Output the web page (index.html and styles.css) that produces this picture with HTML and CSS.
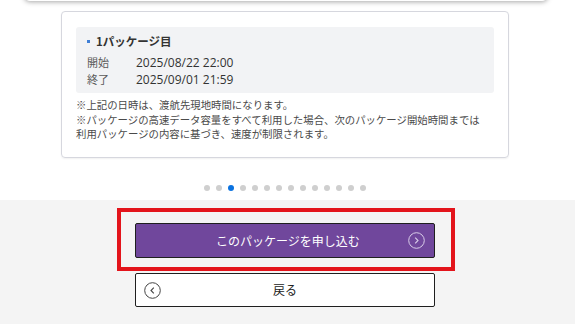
FILE: index.html
```html
<!DOCTYPE html>
<html lang="ja">
<head>
<meta charset="utf-8">
<link rel="stylesheet" href="styles.css">
</head>
<body>
<div class="topcard"></div>
<div class="wrap">
  <div class="card">
    <div class="pkg">
      <div class="pkg-title"><span class="bullet"></span>1パッケージ目</div>
      <div class="row"><span class="lbl">開始</span><span class="val">2025/08/22 22:00</span></div>
      <div class="row"><span class="lbl">終了</span><span class="val">2025/09/01 21:59</span></div>
    </div>
    <div class="notes">
      <div>※上記の日時は、渡航先現地時間になります。</div>
      <div>※パッケージの高速データ容量をすべて利用した場合、次のパッケージ開始時間までは</div>
      <div>利用パッケージの内容に基づき、速度が制限されます。</div>
    </div>
  </div>
  <div class="dots">
    <span class="dot"></span><span class="dot"></span><span class="dot active"></span><span class="dot"></span><span class="dot"></span><span class="dot"></span><span class="dot"></span><span class="dot"></span><span class="dot"></span><span class="dot"></span><span class="dot"></span><span class="dot"></span><span class="dot"></span><span class="dot"></span>
  </div>
</div>
<div class="footer">
  <div class="wrap">
    <div class="primary-wrap">
      <button class="btn primary">
        <span class="btn-text">このパッケージを申し込む</span>
        <svg class="ico ico-right" width="17" height="17" viewBox="0 0 17 17"><circle cx="8.5" cy="8.5" r="7.8" fill="none" stroke="#d9cde9" stroke-width="1"/><path d="M7.2 5.6 L10 8.5 L7.2 11.4" fill="none" stroke="#d9cde9" stroke-width="1.1"/></svg>
      </button>
      <div class="highlight"></div>
    </div>
    <button class="btn back">
      <svg class="ico ico-left" width="17" height="17" viewBox="0 0 17 17"><circle cx="8.5" cy="8.5" r="7.8" fill="none" stroke="#444" stroke-width="1"/><path d="M9.8 5.6 L7 8.5 L9.8 11.4" fill="none" stroke="#444" stroke-width="1.1"/></svg>
      <span class="btn-text">戻る</span>
    </button>
  </div>
</div>
</body>
</html>
```
FILE: styles.css
```css
html, body {
  margin: 0;
  padding: 0;
  background: #fff;
  font-family: "Noto Sans CJK JP", "Noto Sans", sans-serif;
  color: #333;
  height: 324px;
  overflow: hidden;
}
.topcard {
  margin: -9px 27px 0 24px;
  height: 10px;
  background: #fff;
  border-radius: 0 0 6px 6px;
  box-shadow: 0 1px 5px rgba(0,0,0,0.35);
}
.wrap {
  margin-left: 61px;
  width: 448px;
}
.card {
  margin-top: 10px;
  border: 1px solid #d6d7de;
  border-radius: 4px;
  padding: 15px 14px 15px 14px;
  box-shadow: 0 1px 2px rgba(0,0,0,0.06);
}
.pkg {
  background: #f2f3f5;
  border-radius: 3px;
  padding: 6px 11px 5px 11px;
  font-size: 11px;
  line-height: 17px;
}
.pkg-title {
  font-weight: bold;
  font-size: 11.5px;
  color: #333;
  margin-bottom: 4px;
  display: flex;
  align-items: center;
}
.bullet {
  width: 3px;
  height: 3px;
  background: #3f7fd6;
  margin-right: 6px;
}
.row {
  display: flex;
  align-items: baseline;
}
.lbl {
  width: 49px;
  color: #5a5a5a;
}
.val {
  color: #333;
  font-family: "Open Sans", "Noto Sans CJK JP", sans-serif;
  font-size: 12px;
}
.notes {
  margin-top: 5px;
  font-size: 10.4px;
  line-height: 14.5px;
  color: #4a4a4a;
  white-space: nowrap;
}
.dots {
  margin-top: 27px;
  height: 6px;
  margin-bottom: 9px;
  display: flex;
  justify-content: center;
  gap: 6px;
}
.dot {
  width: 6px;
  height: 6px;
  border-radius: 50%;
  background: #cfcfcf;
}
.dot.active {
  background: #0a72e0;
}
.footer {
  background: #f4f4f4;
  padding-top: 23px;
  height: 124px;
  box-sizing: border-box;
}
.primary-wrap {
  position: relative;
  width: 300px;
  margin: 0 auto;
}
.btn {
  display: flex;
  align-items: center;
  position: relative;
  width: 300px;
  margin: 0 auto;
  border: 1px solid #1f1f1f;
  border-radius: 2px;
  font-family: inherit;
  font-size: 12px;
  padding: 0;
  box-sizing: border-box;
}
.btn-text {
  flex: 1;
  text-align: center;
}
.primary {
  height: 35px;
  background: #70479c;
  color: #fff;
}
.primary .btn-text {
  padding-left: 6px;
}
.ico-right {
  position: absolute;
  right: 9px;
  top: 8px;
}
.back {
  margin-top: 15px;
  height: 34px;
  background: #fff;
  color: #222;
}
.ico-left {
  position: absolute;
  left: 8px;
  top: 8px;
}
.highlight {
  position: absolute;
  left: -18px;
  right: -20px;
  top: -15px;
  bottom: -13px;
  border: 4px solid #e3141b;
  pointer-events: none;
}
```
